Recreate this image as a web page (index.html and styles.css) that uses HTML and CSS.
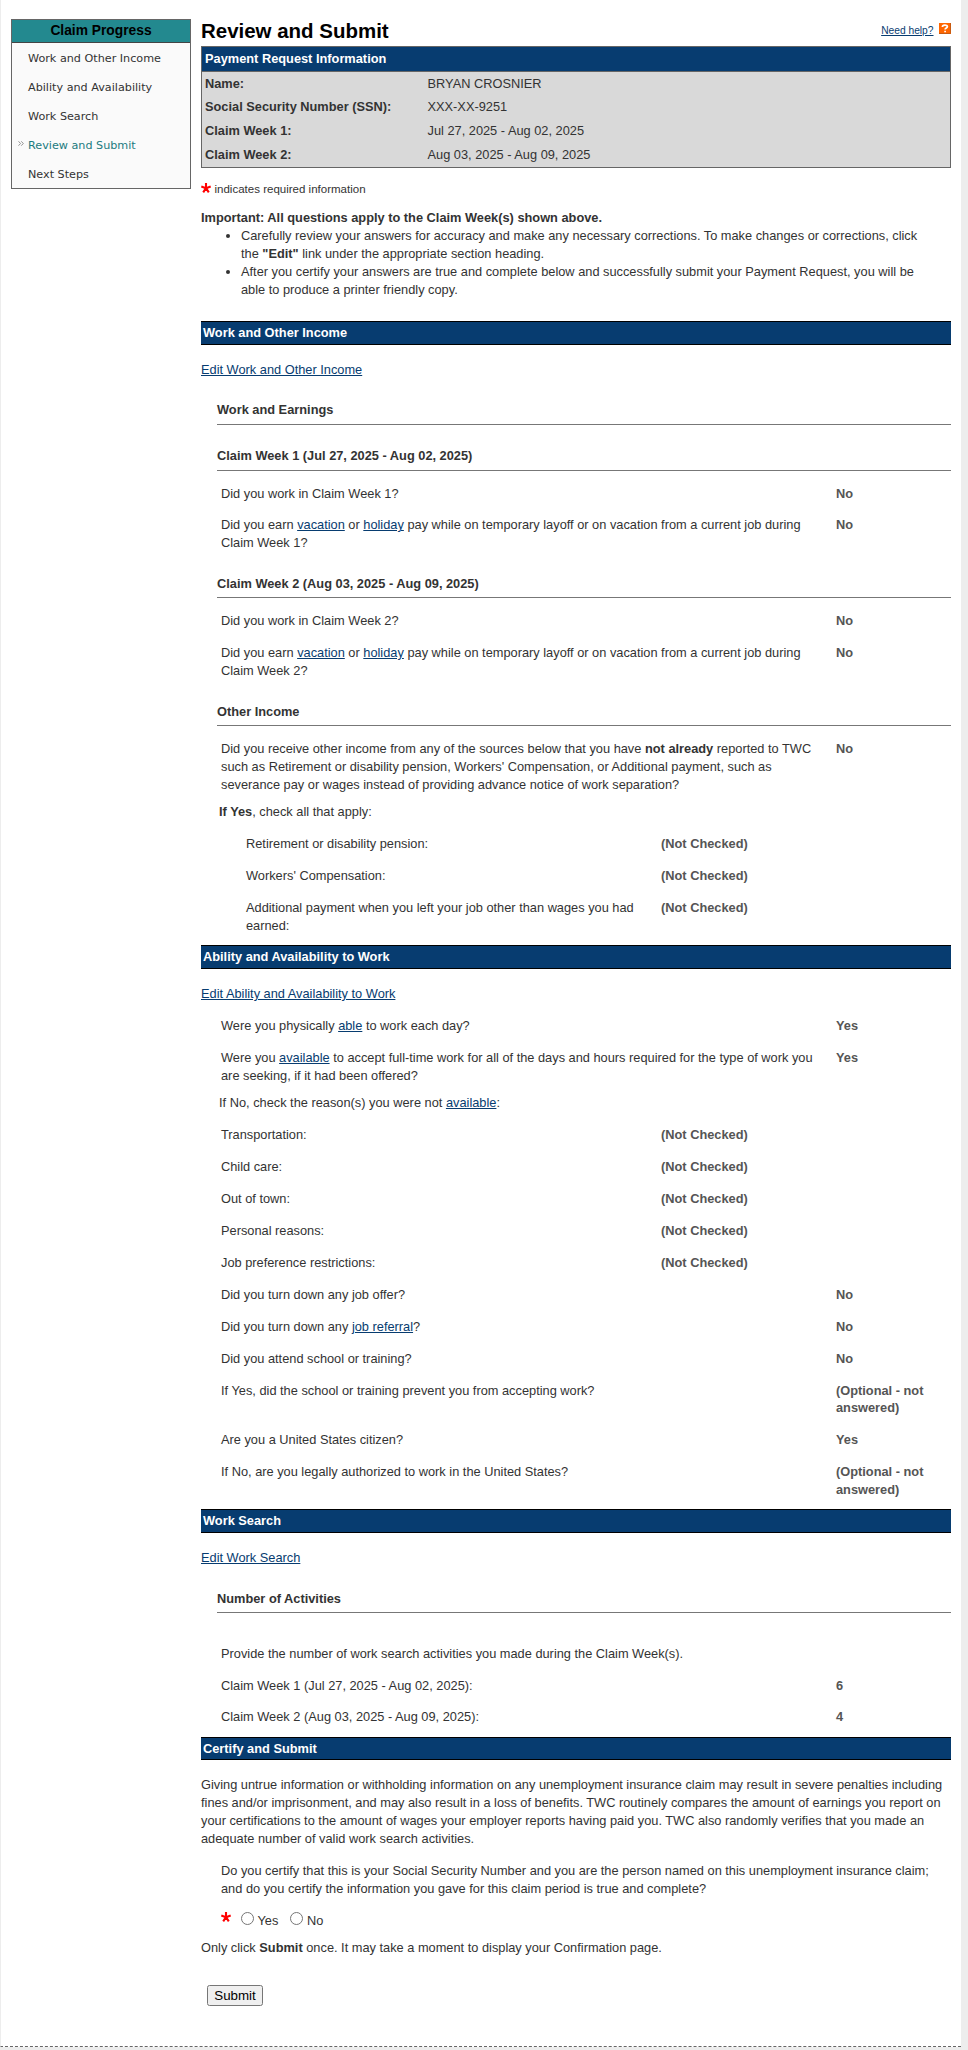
FILE: index.html
```html
<!DOCTYPE html>
<html lang="en">
<head>
<meta charset="utf-8">
<title>Review and Submit</title>
<link rel="stylesheet" href="styles.css">
</head>
<body>
<svg class="defs" aria-hidden="true">
  <symbol id="star" viewBox="0 0 10 10"><path d="M5 5.2V0M5 5.2L.3 3.500M5 5.2l4.700-1.700M5 5.2L2.200 9.300M5 5.2L7.800 9.300" stroke="#f00" stroke-width="2.100" fill="none"/></symbol>
</svg>
<div class="page">
  <nav class="progress">
    <h2>Claim Progress</h2>
    <ul>
      <li>Work and Other Income</li>
      <li>Ability and Availability</li>
      <li>Work Search</li>
      <li class="current"><svg class="chevrons" viewBox="0 0 6 5"><path d="M.5.3l2 2.2-2 2.2M3.3.3l2 2.2-2 2.2" fill="none" stroke="#888" stroke-width=".9"/></svg>Review and Submit</li>
      <li>Next Steps</li>
    </ul>
  </nav>
  <main>
    <div class="title">
      <h1>Review and Submit</h1>
      <div class="help"><a href="#">Need help?</a>
        <svg class="help-icon" width="12" height="11" viewBox="0 0 12 11"><path fill="#f60" d="M0 0h12v11H0z"/><path d="M11.5 0v10.5H0" fill="none" stroke="#c85a10"/><path d="M3.4 3.9c0-2.3 5-2.3 5-.3 0 1.500-2.300 1.300-2.300 3M6.100 7.700v1.600" fill="none" stroke="#fff" stroke-width="1.700"/></svg>
      </div>
    </div>
    <section class="info">
      <h2>Payment Request Information</h2>
      <dl>
        <dt>Name:</dt><dd>BRYAN CROSNIER</dd>
        <dt>Social Security Number (SSN):</dt><dd>XXX-XX-9251</dd>
        <dt>Claim Week 1:</dt><dd>Jul 27, 2025 - Aug 02, 2025</dd>
        <dt>Claim Week 2:</dt><dd>Aug 03, 2025 - Aug 09, 2025</dd>
      </dl>
    </section>
    <p class="required"><svg class="star"><use href="#star"/></svg>indicates required information</p>
    <p class="important"><b>Important: All questions apply to the Claim Week(s) shown above.</b></p>
    <ul class="notes">
      <li>Carefully review your answers for accuracy and make any necessary corrections. To make changes or corrections, click the <b>"Edit"</b> link under the appropriate section heading.</li>
      <li>After you certify your answers are true and complete below and successfully submit your Payment Request, you will be able to produce a printer friendly copy.</li>
    </ul>

    <h2 class="bar first">Work and Other Income</h2>
    <p class="edit"><a href="#">Edit Work and Other Income</a></p>
    <h3>Work and Earnings</h3>
    <h3>Claim Week 1 (Jul 27, 2025 - Aug 02, 2025)</h3>
    <div class="rows">
      <div class="row"><span>Did you work in Claim Week 1?</span><b>No</b></div>
      <div class="row"><span>Did you earn <a href="#">vacation</a> or <a href="#">holiday</a> pay while on temporary layoff or on vacation from a current job during Claim Week 1?</span><b>No</b></div>
    </div>
    <h3>Claim Week 2 (Aug 03, 2025 - Aug 09, 2025)</h3>
    <div class="rows">
      <div class="row"><span>Did you work in Claim Week 2?</span><b>No</b></div>
      <div class="row"><span>Did you earn <a href="#">vacation</a> or <a href="#">holiday</a> pay while on temporary layoff or on vacation from a current job during Claim Week 2?</span><b>No</b></div>
    </div>
    <h3>Other Income</h3>
    <div class="rows">
      <div class="row"><span>Did you receive other income from any of the sources below that you have <strong>not already</strong> reported to TWC such as Retirement or disability pension, Workers' Compensation, or Additional payment, such as severance pay or wages instead of providing advance notice of work separation?</span><b>No</b></div>
      <p class="lead"><strong>If Yes</strong>, check all that apply:</p>
      <div class="row check inset"><span>Retirement or disability pension:</span><b>(Not Checked)</b></div>
      <div class="row check inset"><span>Workers' Compensation:</span><b>(Not Checked)</b></div>
      <div class="row check inset"><span>Additional payment when you left your job other than wages you had earned:</span><b>(Not Checked)</b></div>
    </div>

    <h2 class="bar">Ability and Availability to Work</h2>
    <p class="edit"><a href="#">Edit Ability and Availability to Work</a></p>
    <div class="rows">
      <div class="row"><span>Were you physically <a href="#">able</a> to work each day?</span><b>Yes</b></div>
      <div class="row"><span>Were you <a href="#">available</a> to accept full-time work for all of the days and hours required for the type of work you are seeking, if it had been offered?</span><b>Yes</b></div>
      <p class="lead">If No, check the reason(s) you were not <a href="#">available</a>:</p>
      <div class="row check"><span>Transportation:</span><b>(Not Checked)</b></div>
      <div class="row check"><span>Child care:</span><b>(Not Checked)</b></div>
      <div class="row check"><span>Out of town:</span><b>(Not Checked)</b></div>
      <div class="row check"><span>Personal reasons:</span><b>(Not Checked)</b></div>
      <div class="row check"><span>Job preference restrictions:</span><b>(Not Checked)</b></div>
      <div class="row"><span>Did you turn down any job offer?</span><b>No</b></div>
      <div class="row"><span>Did you turn down any <a href="#">job referral</a>?</span><b>No</b></div>
      <div class="row"><span>Did you attend school or training?</span><b>No</b></div>
      <div class="row"><span>If Yes, did the school or training prevent you from accepting work?</span><b>(Optional - not answered)</b></div>
      <div class="row"><span>Are you a United States citizen?</span><b>Yes</b></div>
      <div class="row"><span>If No, are you legally authorized to work in the United States?</span><b>(Optional - not answered)</b></div>
    </div>

    <h2 class="bar">Work Search</h2>
    <p class="edit"><a href="#">Edit Work Search</a></p>
    <h3>Number of Activities</h3>
    <div class="rows activities">
      <div class="row"><span>Provide the number of work search activities you made during the Claim Week(s).</span></div>
      <div class="row"><span>Claim Week 1 (Jul 27, 2025 - Aug 02, 2025):</span><b>6</b></div>
      <div class="row"><span>Claim Week 2 (Aug 03, 2025 - Aug 09, 2025):</span><b>4</b></div>
    </div>

    <h2 class="bar">Certify and Submit</h2>
    <p class="warning">Giving untrue information or withholding information on any unemployment insurance claim may result in severe penalties including fines and/or imprisonment, and may also result in a loss of benefits. TWC routinely compares the amount of earnings you report on your certifications to the amount of wages your employer reports having paid you. TWC also randomly verifies that you made an adequate number of valid work search activities.</p>
    <form>
      <p class="question">Do you certify that this is your Social Security Number and you are the person named on this unemployment insurance claim; and do you certify the information you gave for this claim period is true and complete?</p>
      <div class="choices">
        <svg class="star"><use href="#star"/></svg>
        <label><input type="radio" name="certify">Yes</label>
        <label><input type="radio" name="certify">No</label>
      </div>
      <p class="once">Only click <b>Submit</b> once. It may take a moment to display your Confirmation page.</p>
      <button type="button">Submit</button>
    </form>
  </main>
</div>
</body>
</html>
```
FILE: styles.css
```css
* { box-sizing: border-box; }
body {
  margin: 0;
  background: #ededed;
  color: #333;
  font: 12.8px/17.92px "Liberation Sans", Arial, sans-serif;
}
h1, h2, h3, p, ul, dl, dd { margin: 0; padding: 0; }
h2, h3 { font-size: 12.8px; }
a { color: #073c70; text-decoration: underline; }
.defs { display: none; }
.star { width: 10px; height: 10px; flex: none; }

.page {
  display: flex;
  align-items: flex-start;
  gap: 10px;
  width: 961px;
  height: 2047px;
  padding: 0 10px;
  border-left: 1px solid #ededed;
  border-bottom: 1px dashed #666;
  background: #fff;
}

.progress {
  flex: none;
  width: 180px;
  height: 170px;
  margin-top: 19px;
  border: 1px solid #666;
  background: #fafafa;
}
.progress h2 {
  height: 23px;
  padding-top: 2px;
  border-bottom: 1px solid #444;
  background: #23898f;
  color: #000;
  font-size: 13.8px;
  text-align: center;
}
.progress ul {
  padding: 1px 0 0 16px;
  list-style: none;
  font: 11.2px/29px "DejaVu Sans", Verdana, sans-serif;
}
.progress li { position: relative; white-space: nowrap; }
.progress .current { color: #1c7b80; }
.chevrons { position: absolute; left: -10px; top: 10px; width: 6px; height: 5px; }

main { width: 750px; padding-top: 14px; }
.title { display: flex; justify-content: space-between; height: 32px; }
.title h1 { color: #000; font-size: 20.48px; line-height: 34px; }
.help { display: flex; gap: 5.5px; padding-top: 9px; font-size: 10.24px; line-height: 15px; }

.info { height: 122px; border: 1px solid #666; background: #d9d9d9; }
.info h2 {
  height: 25px;
  padding: 3px 3px 0;
  border-bottom: 1px solid #666;
  background: #073c70;
  color: #fff;
}
.info dl {
  display: grid;
  grid-template-columns: 222.5px 1fr;
  row-gap: 5.8px;
  padding: 2.7px 3px 0;
}
.info dt { font-weight: bold; }

.required {
  display: flex;
  gap: 3.5px;
  margin-top: 13px;
  font-size: 11.52px;
}
.required .star { margin-top: 2px; }
.important { margin-top: 10.5px; }
.notes { width: 730px; padding-left: 40px; }

.bar {
  height: 23.92px;
  margin-top: 3.1px;
  padding: 2px 2px 0;
  border: solid #000;
  border-width: 1px 0;
  background: #073c70;
  color: #fff;
}
.bar.first { margin-top: 21.8px; }
.edit { margin-top: 16.2px; }
h3 {
  margin: 22.6px 0 0 16px;
  padding-bottom: 4.5px;
  border-bottom: 1px solid #777;
}
.rows { padding: 6.7px 0 0 20px; }
.rows + h3 { margin-top: 15.7px; }
.rows.activities { padding-top: 24.4px; }
.row {
  display: grid;
  grid-template-columns: 599px 115px;
  column-gap: 16px;
  padding: 7px 0;
}
.row b { color: #555; }
.row.check { grid-template-columns: 424px 290px; }
.row.inset { grid-template-columns: 399px 290px; padding-left: 25px; }
.lead { margin-left: -2px; padding: 2.8px 0 7px; }

.warning { margin-top: 16px; }
.question { margin: 13.6px 0 0 20px; }
.choices {
  display: flex;
  height: 41px;
  padding: 13px 0 0 20px;
}
.choices .star { margin: 1px 10px 0 0; }
.choices label { display: flex; margin-right: 12px; line-height: 19px; }
.choices input { width: 13px; height: 13px; margin: 1px 3.5px 0 0; }
button {
  width: 56px;
  height: 21px;
  margin: 28.5px 0 0 6px;
  padding: 0;
  border: 1px solid #767676;
  border-radius: 2.5px;
  background: #efefef;
  color: #000;
  font: 13.333px "Liberation Sans", Arial, sans-serif;
}
```
